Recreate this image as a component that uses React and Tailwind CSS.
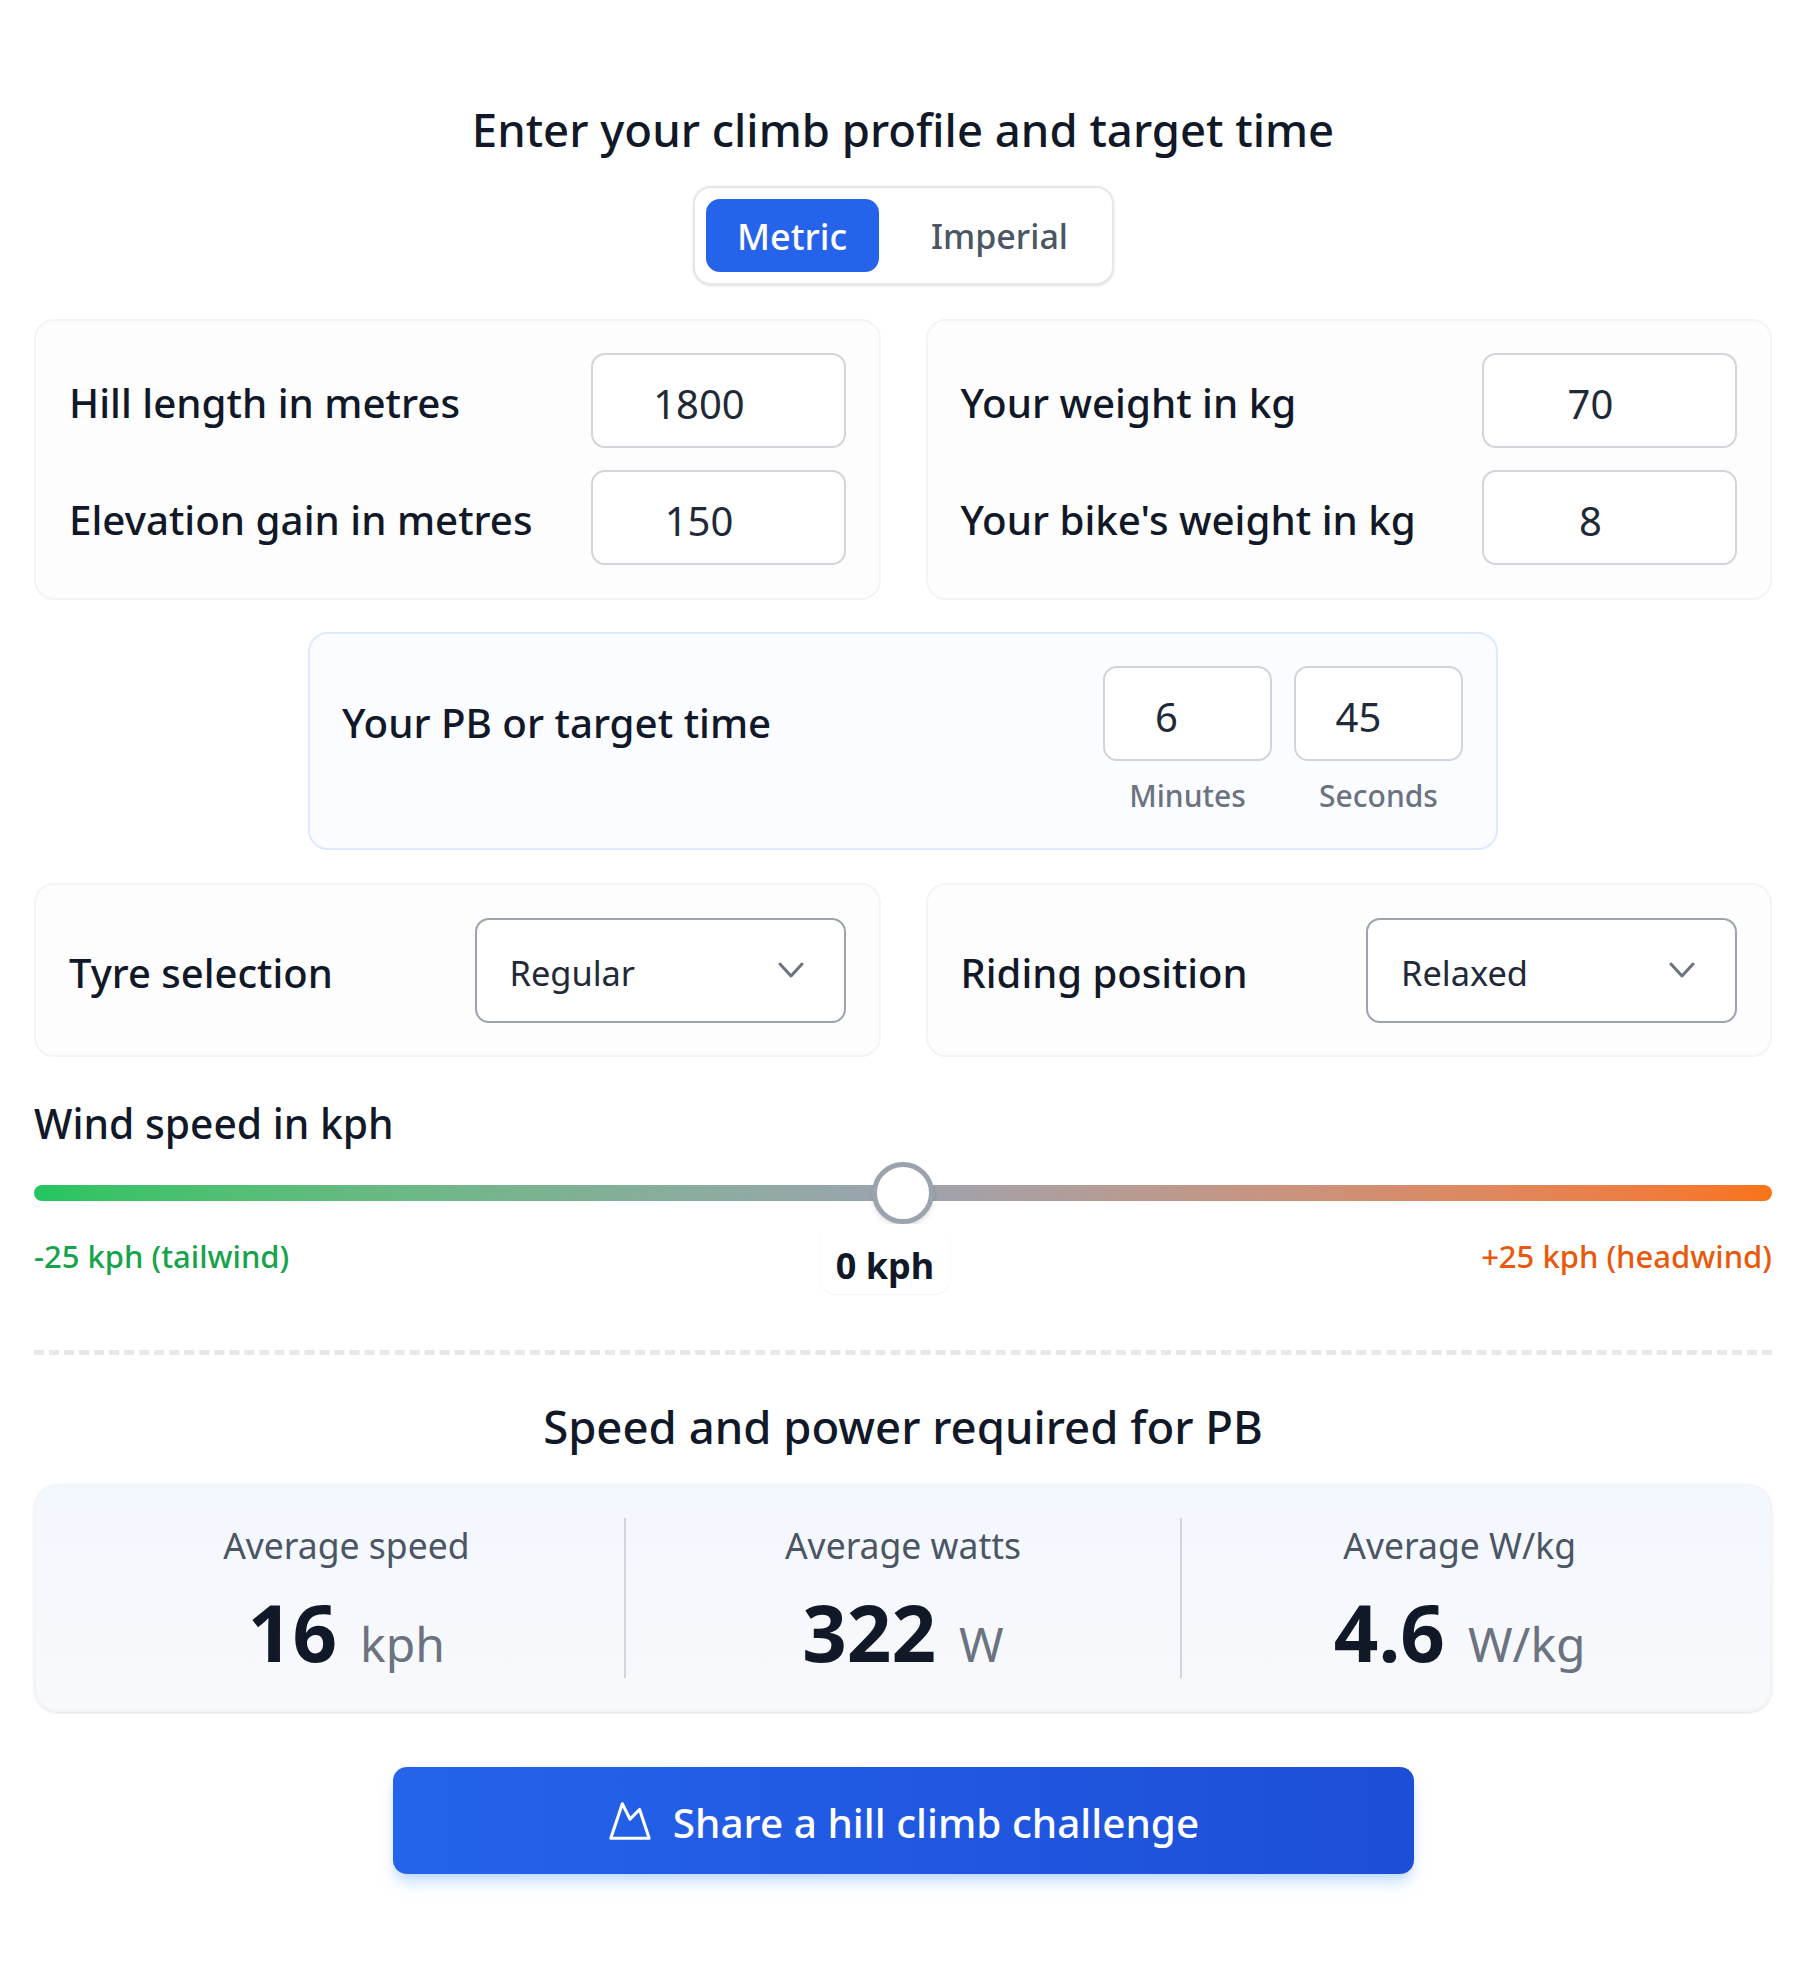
import { Mountain } from "lucide-react";

function NumberBox({ value, className = "" }) {
  return (
    <div className={`h-[95px] rounded-[14px] border-2 border-[#d1d5db] bg-white flex items-center pt-[7px] text-[40px] text-[#1f2937] ${className}`}>
      {value}
    </div>
  );
}

function FieldRow({ label, value }) {
  return (
    <div className="flex items-center justify-between h-[95px]">
      <span className="pt-[5px] text-[40.3px] font-medium text-[#111827]">{label}</span>
      <NumberBox value={value} className="w-[255px] justify-center pr-[38px]" />
    </div>
  );
}

function FieldCard({ rows }) {
  return (
    <div className="flex-1 h-[281px] rounded-[20px] border-2 border-[#f3f4f6] bg-[#fdfdfe] pl-[33px] pr-[33px] pt-[32px] flex flex-col gap-[22px]">
      {rows.map((r) => (
        <FieldRow key={r.label} label={r.label} value={r.value} />
      ))}
    </div>
  );
}

function SelectCard({ label, value }) {
  return (
    <div className="flex-1 h-[174px] rounded-[20px] border-2 border-[#f3f4f6] bg-[#fdfdfe] pl-[33px] pr-[33px] flex items-center justify-between">
      <span className="pt-[5px] text-[40px] font-medium text-[#111827]">{label}</span>
      <div className="w-[371px] h-[105px] rounded-[14px] border-2 border-[#9ca3af] bg-white flex items-center justify-between pl-[33px] pr-[40px] text-[34.4px] text-[#1f2937]">
        <span className="pt-[5px]">{value}</span>
        <svg width="26" height="16" viewBox="0 0 26 16" fill="none" stroke="#6b7280" strokeWidth="3" strokeLinecap="round" strokeLinejoin="round">
          <path d="M2 2 13 14 24 2" />
        </svg>
      </div>
    </div>
  );
}

function Stat({ label, value, unit, border }) {
  return (
    <div className={`flex-1 h-[160px] flex flex-col items-center ${border ? "border-l-2 border-[#d1d5db]" : ""}`}>
      <span className="mt-[1px] text-[35.5px] leading-[52px] text-[#4b5563]">{label}</span>
      <div className="flex items-baseline gap-[23px] mt-[16px]">
        <span className="text-[78px] leading-[90px] font-bold text-[#111827]">{value}</span>
        <span className="text-[48px] text-[#6b7280]">{unit}</span>
      </div>
    </div>
  );
}

export default function App() {
  return (
    <div className="w-[1799px] h-[1964px] bg-white pl-[34px] pr-[27px] pt-[97px] font-['Noto_Sans',sans-serif]">
      <h2 className="text-center text-[45.5px] leading-[64px] font-medium text-[#111827]">
        Enter your climb profile and target time
      </h2>

      <div className="flex justify-center mt-[25px]">
        <div className="flex w-[421px] h-[99px] rounded-[18px] border-2 border-[#e5e7eb] bg-white p-[11px] shadow-sm">
          <div className="w-[173px] pt-[2px] rounded-[14px] bg-[#2563eb] text-white text-[36px] font-medium flex items-center justify-center">
            Metric
          </div>
          <div className="flex-1 pt-[2px] pl-[20px] text-[#4b5563] text-[34px] font-medium flex items-center justify-center">
            Imperial
          </div>
        </div>
      </div>

      <div className="flex gap-[45px] mt-[34px]">
        <FieldCard
          rows={[
            { label: "Hill length in metres", value: "1800" },
            { label: "Elevation gain in metres", value: "150" },
          ]}
        />
        <FieldCard
          rows={[
            { label: "Your weight in kg", value: "70" },
            { label: "Your bike's weight in kg", value: "8" },
          ]}
        />
      </div>

      <div className="flex justify-center mt-[32px]">
        <div className="w-[1190px] h-[218px] rounded-[20px] border-2 border-[#dbeafe] bg-[#fbfcff] pl-[32px] pr-[33px] pt-[32px] flex justify-between">
          <span className="text-[40.3px] font-medium text-[#111827] mt-[27px]">Your PB or target time</span>
          <div className="flex gap-[22px]">
            <div className="w-[169px] flex flex-col items-center">
              <NumberBox value="6" className="w-full justify-center pr-[42px]" />
              <span className="text-[30px] font-medium text-[#6b7280] mt-[12px]">Minutes</span>
            </div>
            <div className="w-[169px] flex flex-col items-center">
              <NumberBox value="45" className="w-full justify-center pr-[40px]" />
              <span className="text-[30px] font-medium text-[#6b7280] mt-[12px]">Seconds</span>
            </div>
          </div>
        </div>
      </div>

      <div className="flex gap-[45px] mt-[33px]">
        <SelectCard label="Tyre selection" value="Regular" />
        <SelectCard label="Riding position" value="Relaxed" />
      </div>

      <div className="text-[40.8px] font-medium text-[#111827] mt-[37px] leading-[58px]">Wind speed in kph</div>

      <div className="relative h-[16px] rounded-full bg-gradient-to-r from-[#22c55e] via-[#9ca3af] to-[#f97316] mt-[33px]">
        <div className="absolute left-[838px] top-[-23px] w-[62px] h-[62px] rounded-full border-[5px] border-[#9ca3af] bg-white shadow-md" />
      </div>

      <div className="relative flex justify-between mt-[33px] text-[31px] font-medium leading-[44px]">
        <span className="text-[#16a34a]">-25 kph (tailwind)</span>
        <span className="text-[#ea580c]">+25 kph (headwind)</span>
        <span className="absolute left-[786px] top-[-10px] w-[130px] h-[70px] pt-[14px] flex items-center justify-center rounded-[16px] bg-white shadow-[0_1px_2px_rgba(0,0,0,0.05)] text-[36px] font-bold text-[#111827]">
          0 kph
        </span>
      </div>

      <div className="border-t-[5px] border-dashed border-[#e8e8e8] mt-[72px]" />

      <h3 className="text-center text-[45.5px] leading-[64px] font-medium text-[#111827] mt-[39px]">
        Speed and power required for PB
      </h3>

      <div className="flex h-[228px] rounded-[24px] border-2 border-[#f3f4f6] bg-gradient-to-b from-[#f3f7fe] to-[#f8f9fb] shadow-sm py-[32px] px-[33px] mt-[26px]">
        <Stat label="Average speed" value="16" unit="kph" />
        <Stat label="Average watts" value="322" unit="W" border />
        <Stat label="Average W/kg" value="4.6" unit="W/kg" border />
      </div>

      <div className="flex justify-center mt-[55px]">
        <div className="w-[1021px] h-[107px] rounded-[14px] bg-gradient-to-r from-[#2563eb] to-[#1d4ed8] shadow-lg shadow-blue-200 flex items-center justify-center gap-[20px] text-white text-[40.5px] font-medium">
          <Mountain size={46} strokeWidth={1.6} />
          <span className="pt-[5px]">Share a hill climb challenge</span>
        </div>
      </div>
    </div>
  );
}
